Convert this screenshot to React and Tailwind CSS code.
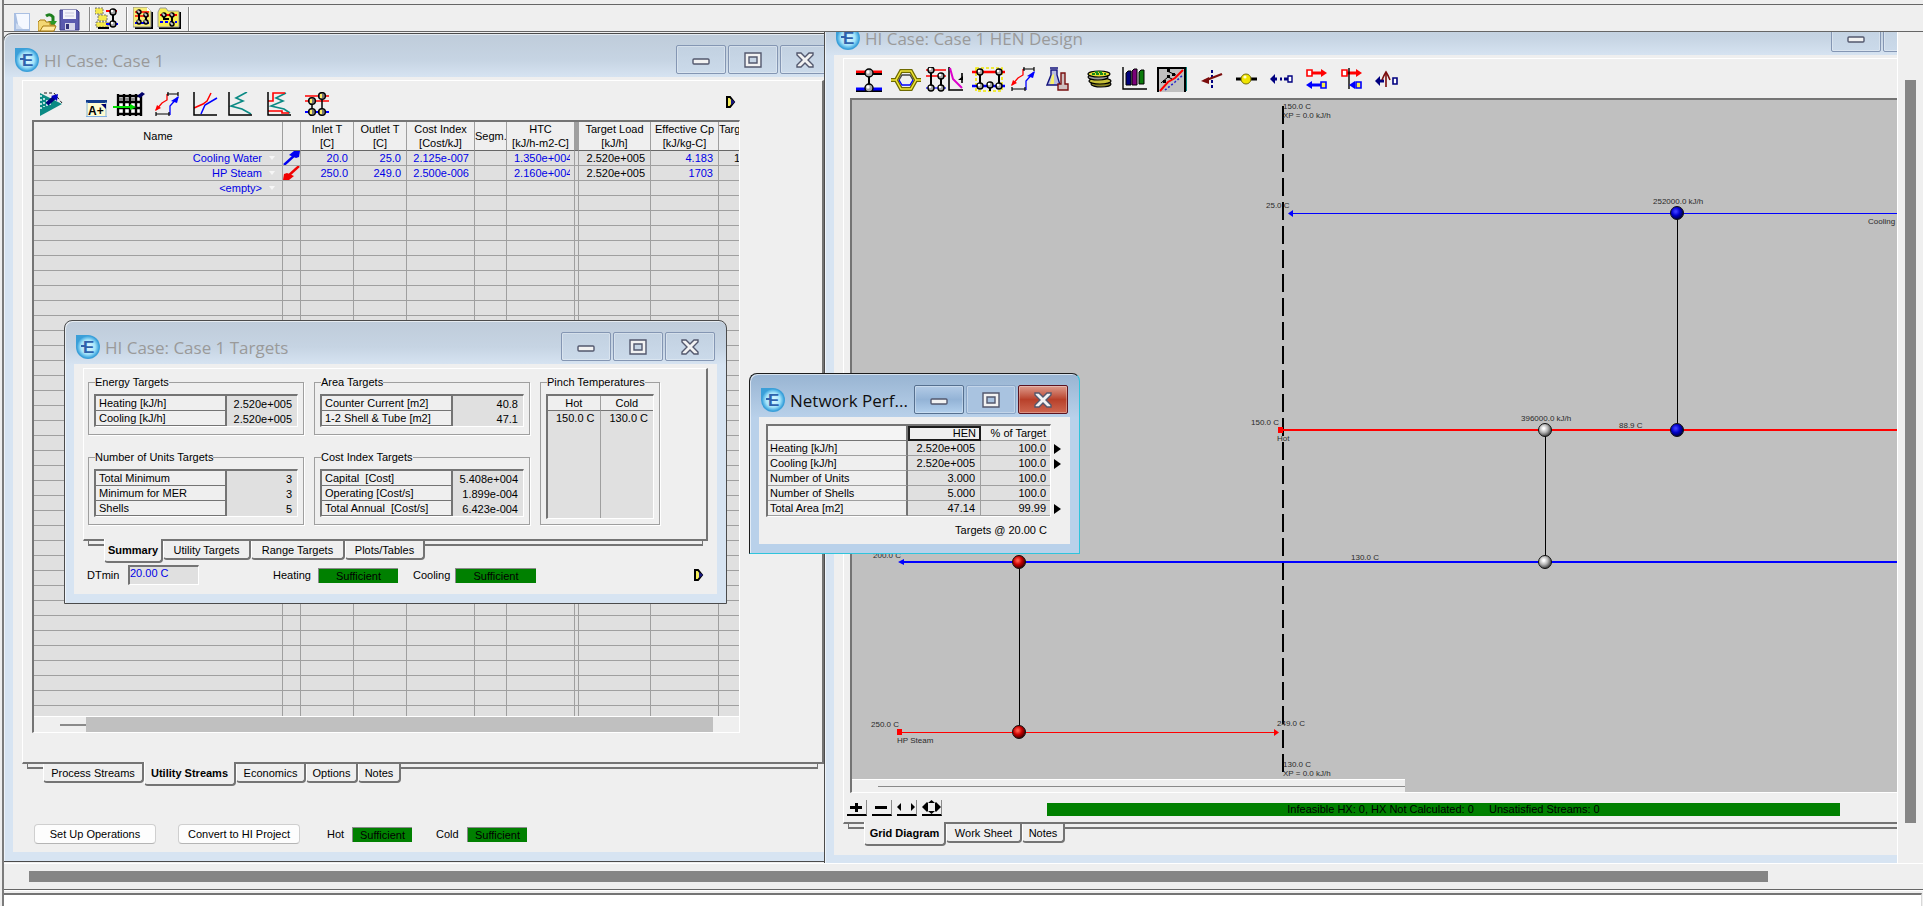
import React from 'react';
import clsx from 'clsx';

const uiFont = "font-['Liberation_Sans',Arial,sans-serif]";
const titleFont = "font-['Open_Sans','Noto_Sans',sans-serif]";
const sunken =
  'border-t-2 border-l-2 border-r border-b border-t-[#747474] border-l-[#747474] border-r-white border-b-white';

/* ---------- icons ---------- */

const Svg = ({ w, h = 24, children, ...rest }) => (
  <svg width={w} height={h} viewBox={`0 0 ${w} ${h}`} fill="none" aria-hidden="true" {...rest}>
    {children}
  </svg>
);

const Dot = ({ x, y, r = 3 }) => (
  <g>
    <circle cx={x} cy={y} r={r} fill="#a8a8a8" stroke="#000" strokeWidth="1.4" />
    <circle cx={x - 1} cy={y - 1} r={r / 2.4} fill="#fff" />
  </g>
);

const YellowDot = ({ x, y }) => (
  <g>
    <circle cx={x} cy={y} r="3.4" fill="#777" stroke="#000" strokeWidth="1.4" />
    <path d={`M${x - 1} ${y - 2}v4`} stroke="#ffee66" strokeWidth="2" />
  </g>
);

const Logo = () => (
  <svg width="24" height="24" viewBox="0 0 24 24" className="shrink-0" aria-hidden="true">
    <defs>
      <radialGradient id="logoFill">
        <stop offset="0" stopColor="#e6fbff" />
        <stop offset="0.65" stopColor="#a5e4fa" />
        <stop offset="1" stopColor="#3ba3dd" />
      </radialGradient>
    </defs>
    <path d="M0 0H12A12 12 0 1 1 0 12Z" fill="#3b9fd8" />
    <circle cx="12" cy="12" r="11" fill="url(#logoFill)" />
    <path d="M5 11h4" stroke="#2f62ac" strokeWidth="2" />
    <text x="7" y="18" fontSize="17" fontWeight="700" fill="#2f62ac" fontFamily="Liberation Sans, Arial, sans-serif">E</text>
  </svg>
);

const PlayMark = () => (
  <svg width="10" height="12" viewBox="0 0 10 12" aria-hidden="true">
    <path d="M1 1H4L8 6L4 11H1Z" fill="#f5ee5a" stroke="#000" strokeWidth="2" />
    <path d="M5 3L9 6L5 9Z" fill="#1a1a80" />
  </svg>
);

const SlimArrow = ({ color, up }) => (
  <svg width="17" height="14" viewBox="0 0 17 14" aria-hidden="true">
    <g transform={up ? undefined : 'rotate(180 8.5 7)'}>
      <path d="M1 14L13 3" stroke={color} strokeWidth="2.4" />
      <path d="M17 0L16 6L13 7L6 4L11 0Z" fill={color} />
    </g>
  </svg>
);

const CompositeCurve = () => (
  <>
    <path d="M1 18L7 11L12 8V2" stroke="#f00" strokeWidth="1.3" />
    <path d="M0 19L2 13L6 16Z" fill="#f00" />
    <path d="M15 23V14L23 5" stroke="#00f" strokeWidth="1.3" />
    <path d="M24 4L22 11L16 9Z" fill="#00f" />
    <path d="M12 2H23M13 0v4M23 0v4M1 22H14M1 20v4M14 20v4" stroke="#000" strokeWidth="1.2" />
  </>
);

const NetworkBox = ({ x = 0, y = 0 }) => (
  <g transform={`translate(${x} ${y})`}>
    <path d="M0 3H14M0 7H14" stroke="#f00" strokeWidth="1.5" />
    <path d="M0 14H14" stroke="#00f" strokeWidth="2" />
    <path d="M4 3V14M11 6V14" stroke="#000" strokeWidth="2" />
    <Dot x={4} y={3} r={2} />
    <Dot x={11} y={6} r={2} />
    <Dot x={4} y={13} r={2} />
    <Dot x={11} y={13} r={2} />
  </g>
);

const fileTools = [
  {
    name: 'New case',
    w: 24,
    art: (
      <>
        <path d="M0 6H16V24H0Z" fill="#a9bfe2" />
        <path d="M2 7H15V22L5 22Z" fill="#f4f8ff" />
        <path d="M2 22V16L9 22Z" fill="#cfdcf0" />
      </>
    ),
  },
  {
    name: 'Open case',
    w: 21,
    art: (
      <>
        <path d="M8 9Q12 6 15 10V16" stroke="#1e7f1e" strokeWidth="3" />
        <path d="M10 14H19L15 20Z" fill="#2a9a2a" />
        <path d="M0 24V15L2 13H7L8 15H12V18H17L15 24Z" fill="#f3d774" stroke="#a87b10" />
        <path d="M2 24L5 19H18L16 24Z" fill="#ffe9a0" stroke="#a87b10" />
      </>
    ),
  },
  {
    name: 'Save case',
    w: 30,
    art: (
      <>
        <path d="M1 3H18L20 5V23H1Z" fill="#5a5aae" stroke="#3a3a86" />
        <path d="M4 3H17V12H4Z" fill="#f2f2fa" />
        <path d="M6 6H15M6 9H15" stroke="#c8c8dc" />
        <path d="M6 16H16V23H6Z" fill="#d6d6ea" />
        <path d="M7 17H10V22H7Z" fill="#33337a" />
      </>
    ),
  },
  { sep: true, w: 6 },
  {
    name: 'Hierarchy',
    w: 31,
    art: (
      <>
        <path d="M0 1H8V7H0ZM3 8H12V14H3ZM1 15H13V20H1Z" fill="#f5e94a" stroke="#777" strokeDasharray="2 1" />
        <path d="M3 21H14" stroke="#000" strokeWidth="2" />
        <path d="M11 4H22" stroke="#f00" strokeWidth="2" />
        <path d="M11 17H23" stroke="#00f" strokeWidth="2" />
        <path d="M18 6V17" stroke="#000" strokeWidth="2" />
        <Dot x={18} y={5} />
        <Dot x={18} y={17} />
      </>
    ),
  },
  { sep: true, w: 7 },
  {
    name: 'Network report',
    w: 24,
    art: (
      <>
        <path d="M2 21H19V5" stroke="#000" strokeWidth="2" />
        <path d="M0 0H14L18 4V20H0Z" fill="#f7ee78" stroke="#888" />
        <path d="M14 0V4H18Z" fill="#fff" />
        <NetworkBox x={2} y={2} />
      </>
    ),
  },
  {
    name: 'Project folder',
    w: 31,
    art: (
      <>
        <path d="M2 21H23V5" stroke="#000" strokeWidth="2" />
        <path d="M1 5L3 1H9L11 4H22V20H1Z" fill="#f7ee50" stroke="#999" />
        <path d="M3 8H20" stroke="#f00" strokeWidth="2" />
        <path d="M3 15H20" stroke="#00f" strokeWidth="2" strokeDasharray="3 2" />
        <path d="M7 8V12H12M15 8V17" stroke="#000" strokeWidth="2" />
        <Dot x={7} y={8} r={2} />
        <Dot x={15} y={8} r={2} />
        <Dot x={15} y={17} r={2} />
      </>
    ),
  },
  { sep: true, w: 4 },
];

const caseTools = [
  {
    name: 'Process view',
    w: 46,
    art: (
      <>
        <path d="M0 1V24L22 12Z" fill="#0b8a84" />
        <path d="M1 3V17M4 6V15M7 8V15M10 11V14" stroke="#dff4f4" strokeWidth="1.6" strokeDasharray="2 2" />
        <path d="M4 1H14L22 11" stroke="#222" strokeDasharray="3 2" />
        <path d="M7 12L15 5" stroke="#00007a" strokeWidth="4" />
        <path d="M18 2L17 9L11 4Z" fill="#0000c8" />
      </>
    ),
  },
  {
    name: 'Annotate utilities',
    w: 27,
    art: (
      <>
        <rect x="0" y="8" width="21" height="17" fill="#fffbd0" />
        <path d="M0 8H21V11H0Z" fill="#123c8c" />
        <path d="M1 10V24M20 10V24M0 24.500H21" stroke="#7fb0e6" />
        <path d="M15 12H20V17Z" fill="#00006e" />
        <text x="2" y="23" fontSize="12" fontWeight="700" fill="#000" fontFamily="Liberation Sans, Arial, sans-serif">A+</text>
      </>
    ),
  },
  {
    name: 'Open stream table',
    w: 42,
    art: (
      <>
        <rect x="3" y="2" width="26" height="22" fill="#fff" />
        <path d="M4 4H27M4 10H27M4 16H27M4 22H27M5 2V24M11 2V24M17 2V24M23 2V24M28 2V24" stroke="#000" strokeWidth="2.4" />
        <path d="M6 6h4v3h-4zM12 6h4v3h-4zM18 6h4v3h-4z" fill="#888" />
        <path d="M0 15H18" stroke="#0d0" strokeWidth="2" />
        <path d="M17 12L23 15L17 18Z" fill="#0d0" />
        <path d="M24 4L29 0L32 2L27 6Z" fill="#00006a" />
      </>
    ),
  },
  { name: 'Composite curves', w: 38, art: <CompositeCurve /> },
  {
    name: 'Utility composite curve',
    w: 35,
    art: (
      <>
        <path d="M1 16L10 12L14 9L18 1" stroke="#f00" strokeWidth="1.5" />
        <path d="M8 22L12 13L24 6" stroke="#00f" strokeWidth="1.5" />
        <path d="M1 0V23H24" stroke="#000" strokeWidth="1.5" />
      </>
    ),
  },
  {
    name: 'Grand composite curve',
    w: 39,
    art: (
      <>
        <path d="M19 0L8 6L15 9L3 14L14 17L23 22" stroke="#0b8a84" strokeWidth="1.6" />
        <path d="M1 0V23H24" stroke="#000" strokeWidth="1.5" />
      </>
    ),
  },
  {
    name: 'Balanced composite curve',
    w: 38,
    art: (
      <>
        <path d="M19 1L9 6L16 9L4 14L17 17L23 21" stroke="#0b8a84" strokeWidth="1.6" />
        <path d="M1 9H6V1H18M1 19H15V21H22" stroke="#f00" strokeWidth="1.6" />
        <path d="M1 0V23H24" stroke="#000" strokeWidth="1.5" />
      </>
    ),
  },
  {
    name: 'Grid diagram',
    w: 24,
    art: (
      <>
        <path d="M0 4H24M0 9H24" stroke="#f00" strokeWidth="1.5" />
        <path d="M0 20H24" stroke="#00f" strokeWidth="2" />
        <path d="M7 9V20M17 4V20" stroke="#000" strokeWidth="1.5" />
        <YellowDot x={7} y={9} />
        <YellowDot x={17} y={4} />
        <YellowDot x={7} y={20} />
        <YellowDot x={17} y={20} />
      </>
    ),
  },
];

const designTools = [
  {
    name: 'Add exchanger',
    w: 35,
    art: (
      <>
        <path d="M0 5H26" stroke="#f00" strokeWidth="3" />
        <path d="M0 7H26M0 24H26" stroke="#000" strokeWidth="2" />
        <path d="M0 22H26" stroke="#00f" strokeWidth="3" />
        <path d="M13 6V20" stroke="#000" strokeWidth="2" />
        <Dot x={13} y={6} r={4} />
        <Dot x={13} y={21} r={4} />
      </>
    ),
  },
  {
    name: 'Loops',
    w: 35,
    art: (
      <>
        <path d="M0 13H5L10 4H20L25 13H30M5 13L10 22H20L25 13" stroke="#6e6a00" strokeWidth="4" />
        <path d="M0 13H5L10 4H20L25 13H30M5 13L10 22H20L25 13" stroke="#f2e83a" strokeWidth="1.5" />
        <path d="M8 13L11 8H19L22 13" fill="none" stroke="#444" strokeWidth="1.4" />
        <path d="M8 13L11 18H19L22 13" stroke="#00f" strokeWidth="1.4" />
      </>
    ),
  },
  {
    name: 'Driving force',
    w: 46,
    art: (
      <>
        <path d="M0 3H20M0 9H20" stroke="#f00" strokeWidth="1.4" />
        <path d="M0 21H20" stroke="#22f" strokeWidth="1.4" />
        <path d="M5 3V21M15 9V21" stroke="#000" strokeWidth="2" />
        <Dot x={5} y={3} />
        <Dot x={15} y={9} />
        <Dot x={5} y={21} />
        <Dot x={15} y={21} />
        <path d="M23 0V23H37M36 6V16" stroke="#000" strokeWidth="1.6" />
        <path d="M24 1L27 12L36 21" stroke="#d0c" strokeWidth="2" />
        <path d="M32 13H37L37 9Z" fill="#000" />
      </>
    ),
  },
  {
    name: 'Topology',
    w: 39,
    art: (
      <>
        <rect x="4" y="1" width="26" height="23" stroke="#f0e800" strokeWidth="1.6" strokeDasharray="3 2" />
        <path d="M0 5H33" stroke="#f00" strokeWidth="2.4" />
        <path d="M0 19H33" stroke="#00f" strokeWidth="2.4" />
        <path d="M8 5V19M27 5V19M18 19V24" stroke="#000" strokeWidth="2" />
        <Dot x={8} y={5} />
        <Dot x={27} y={5} />
        <Dot x={8} y={19} />
        <Dot x={18} y={18} />
        <Dot x={27} y={19} />
      </>
    ),
  },
  { name: 'Composite curves', w: 35, art: <CompositeCurve /> },
  {
    name: 'Properties',
    w: 41,
    art: (
      <>
        <path d="M4 1H12M5 3V8L1 18H14L11 8V3Z" fill="#b9bde0" stroke="#14147e" strokeWidth="1.4" />
        <path d="M6 8L4 17H8V7Z" fill="#f6ef6a" />
        <path d="M15 6H19V17H22V23H12V17H15Z" fill="#cfc0c0" stroke="#7a1010" strokeWidth="1.4" />
      </>
    ),
  },
  {
    name: 'Costs',
    w: 35,
    art: (
      <>
        <ellipse cx="14" cy="17" rx="10" ry="3" fill="#888220" stroke="#000" strokeWidth="1.2" />
        <ellipse cx="13" cy="14" rx="11" ry="3" fill="#c8c03a" stroke="#000" strokeWidth="1.2" />
        <ellipse cx="11" cy="10" rx="10" ry="3" fill="#999" stroke="#000" strokeWidth="1.2" />
        <ellipse cx="12" cy="7" rx="11" ry="3" fill="#e8e030" stroke="#000" strokeWidth="1.2" />
        <path d="M5 7H19M8 5H16" stroke="#1b8a1b" strokeWidth="2" strokeDasharray="3 1" />
      </>
    ),
  },
  {
    name: 'Bar chart',
    w: 35,
    art: (
      <>
        <path d="M1 0V22H25" stroke="#000" strokeWidth="1.4" />
        <path d="M4 6L6 4H9V18H4Z" fill="#00007c" stroke="#000" />
        <path d="M10 4L12 2H15V18H10Z" fill="#7a0078" stroke="#000" />
        <path d="M17 5L19 3H22V17H17Z" fill="#0a7a0a" stroke="#000" />
      </>
    ),
  },
  {
    name: 'Driving force plot',
    w: 44,
    art: (
      <>
        <path d="M1 25V1H28V25" fill="#c0c0c0" stroke="#000" strokeWidth="2" />
        <path d="M29.500 0V24" stroke="#0b8a84" />
        <path d="M3 24L11 15L18 11L26 3" stroke="#f00" strokeWidth="2" />
        <path d="M8 23L18 15L26 8" stroke="#22c" strokeWidth="1.6" strokeDasharray="2 2" />
        <path d="M4 16L11 10L15 12M10 4L19 8" stroke="#000" strokeWidth="1" />
        <path d="M10 8h3v3h-3zM6 13h3v3h-3zM15 6h3v3h-3zM10 2h3v3h-3z" fill="#000" />
      </>
    ),
  },
  {
    name: 'Add utility split',
    w: 35,
    art: (
      <>
        <path d="M11 3V21" stroke="#000080" strokeWidth="2" strokeDasharray="3 2" />
        <path d="M3 14L21 7" stroke="#7a0c0c" strokeWidth="2.4" />
        <path d="M0 14L8 10V17Z" fill="#7a0c0c" />
      </>
    ),
  },
  {
    name: 'Add mixer',
    w: 34,
    art: (
      <>
        <path d="M0 12H21" stroke="#000" strokeWidth="3" />
        <circle cx="10" cy="12" r="5" fill="#f0e400" stroke="#77700a" />
        <circle cx="9" cy="10" r="1.6" fill="#fffdd0" />
      </>
    ),
  },
  {
    name: 'Move stream',
    w: 36,
    art: (
      <>
        <path d="M0 12L5 7V17Z" fill="#000080" />
        <path d="M4 12H7M10 12H12M14 12H18" stroke="#000080" strokeWidth="3" />
        <path d="M18 9H22V15H18Z" fill="#fff" stroke="#000080" strokeWidth="1.4" />
      </>
    ),
  },
  {
    name: 'Swap streams',
    w: 35,
    art: (
      <>
        <path d="M4 6H18" stroke="#f00" strokeWidth="3" />
        <path d="M15 2L21 6L15 10Z" fill="#f00" />
        <path d="M1 3H6V9H1Z" fill="#fff" stroke="#f00" strokeWidth="1.6" />
        <path d="M4 18H18" stroke="#00f" strokeWidth="3" />
        <path d="M6 14L0 18L6 22Z" fill="#00f" />
        <path d="M15 15H20V21H15Z" fill="#f7ee50" stroke="#00f" strokeWidth="1.6" />
      </>
    ),
  },
  {
    name: 'Pinch streams',
    w: 34,
    art: (
      <>
        <path d="M4 6H18" stroke="#f00" strokeWidth="3" />
        <path d="M15 2L21 6L15 10Z" fill="#f00" />
        <path d="M1 3H6V9H1Z" fill="#fff" stroke="#f00" strokeWidth="1.6" />
        <path d="M8 1V22" stroke="#000" strokeWidth="1.4" />
        <path d="M14 14L8 18L14 22Z" fill="#00f" />
        <path d="M15 15H20V21H15Z" fill="#f7ee50" stroke="#00f" strokeWidth="1.6" />
      </>
    ),
  },
  {
    name: 'Split stream',
    w: 24,
    art: (
      <>
        <path d="M0 14L5 9V19Z" fill="#000080" />
        <path d="M5 14H9" stroke="#000080" strokeWidth="3" />
        <path d="M11 5V20" stroke="#7a0c0c" strokeWidth="1.6" />
        <path d="M7 13Q9 8 11 5Q13 8 15 13" stroke="#7a0c0c" strokeWidth="1.6" />
        <path d="M18 11H22V17H18Z" fill="#fff" stroke="#000080" strokeWidth="1.6" />
      </>
    ),
  },
];

const ToolStrip = ({ tools, className }) => (
  <div className={clsx('flex items-start', className)}>
    {tools.map((tool, i) =>
      tool.sep ? (
        <Svg key={i} w={tool.w} h={24}>
          <path d="M0.5 0V24" stroke="#888" />
          <path d="M1.5 0V24" stroke="#fff" />
        </Svg>
      ) : (
        <button key={i} type="button" aria-label={tool.name} className="block shrink-0">
          <Svg w={tool.w} h={25}>{tool.art}</Svg>
        </button>
      )
    )}
  </div>
);

/* ---------- window chrome ---------- */

const captionShapes = {
  Minimize: <rect x="9" y="9" width="16" height="5" rx="1" />,
  Maximize: <path fillRule="evenodd" d="M9 3H25V17H9ZM13 7V13H21V7Z" />,
  Close: <path d="M9 3H13L17 7L21 3H25V5L20 10L25 15V17H21L17 13L13 17H9V15L14 10L9 5V3Z" />,
};

const CaptionButton = ({ kind, active }) => (
  <button
    type="button"
    aria-label={kind}
    className={clsx(
      'flex h-[29px] w-[50px] items-center justify-center rounded-xs border shadow-[inset_0_0_0_1px_rgba(255,255,255,0.3)]',
      !active && 'border-[#8496b3] bg-linear-to-b from-[#c2d1e1] to-[#cbdaea]',
      active && kind === 'Close' && 'border-[#5c1320] bg-linear-to-b from-[#dc9a8c] via-[#b8402a] to-[#cd6650]',
      active && kind === 'Minimize' && 'border-[#56708f] bg-linear-to-b from-[#b3cbe6] via-[#93b3d6] to-[#b2cfec]',
      active && kind === 'Maximize' && 'border-[#8aa5c6] bg-[#a9c3e0]'
    )}
  >
    <svg width="34" height="20" viewBox="0 0 34 20" fill="#f2f2f2" stroke="#53586e" strokeWidth="1.4" aria-hidden="true">
      {captionShapes[kind]}
    </svg>
  </button>
);

const MdiWindow = ({ title, active, className, children }) => (
  <section
    className={clsx(
      'absolute flex flex-col rounded-t-lg border px-[9px] pb-[9px] shadow-[inset_1px_1px_0_rgba(255,255,255,0.6)]',
      active
        ? 'border-[#1c1c1c] border-r-[#2fc4dc] border-b-[#2fc4dc] bg-[#b9d1ea] bg-[linear-gradient(#98b4d2,#b9d1ea_44px)]'
        : 'border-[#4b4b4b] bg-[#d7e4f2] bg-[linear-gradient(#bfccda,#c6d4e3_26px,#d7e4f2_44px)]',
      className
    )}
  >
    <header className="flex h-[43px] shrink-0 items-center gap-[2px] pt-2 pr-[2px] pl-[2px]">
      <Logo />
      <h2
        className={clsx(
          'mr-auto truncate pt-[3px] pl-[3px] text-[17px] leading-6',
          titleFont,
          active ? 'text-[#101010]' : 'text-[#9a9a9a]'
        )}
      >
        {title}
      </h2>
      <CaptionButton kind="Minimize" active={active} />
      <CaptionButton kind="Maximize" active={active} />
      <CaptionButton kind="Close" active={active} />
    </header>
    <div className="flex min-h-0 flex-1 flex-col bg-[#efefef]">{children}</div>
  </section>
);

const Stub = ({ className }) => (
  <span className={clsx('h-[5px] border-b-2 border-[#747474]', className)} />
);

const Tabs = ({ tabs, current, className }) => (
  <div role="tablist" className={clsx('mx-[14px] flex items-start', className)}>
    <Stub className="w-4 border-l" />
    {tabs.map((tab) => (
      <button
        key={tab.label}
        type="button"
        role="tab"
        aria-selected={tab.label === current}
        className={clsx(
          'shrink-0 rounded-b-sm border-r-2 border-b-2 border-l border-r-[#747474] border-b-[#747474] border-l-white bg-[#efefef] text-center whitespace-nowrap',
          tab.label === current ? 'relative -mt-[2px] h-[24px] font-bold' : 'h-[19px]',
          tab.width
        )}
      >
        {tab.label}
      </button>
    ))}
    <Stub className="flex-1 border-r" />
  </div>
);

const panelBorder =
  'border-t border-l border-r-2 border-b-2 border-t-white border-l-white border-r-[#747474] border-b-[#747474]';

const Status = ({ children, className }) => (
  <output
    className={clsx(
      'block h-[15px] border-t border-l border-t-[#8a8a8a] border-l-[#8a8a8a] bg-[#008000] text-center leading-[15px]',
      className
    )}
  >
    {children}
  </output>
);

/* ---------- HI case window ---------- */

const columns = [
  { lines: ['Name'], width: 'w-[249px]' },
  { lines: [], width: 'w-[18px]' },
  { lines: ['Inlet T', '[C]'], width: 'w-[53px]' },
  { lines: ['Outlet T', '[C]'], width: 'w-[53px]' },
  { lines: ['Cost Index', '[Cost/kJ]'], width: 'w-[68px]' },
  { lines: ['Segm.'], width: 'w-[32px]' },
  { lines: ['HTC', '[kJ/h-m2-C]'], width: 'w-[68px]' },
  { lines: [], width: 'w-[4px]' },
  { lines: ['Target Load', '[kJ/h]'], width: 'w-[72px]' },
  { lines: ['Effective Cp', '[kJ/kg-C]'], width: 'w-[68px]' },
  { lines: ['Targ', ''], width: 'w-[22px]' },
];

const utilities = [
  ['Cooling Water', 'cold', '20.0', '25.0', '2.125e-007', '', '1.350e+004', '', '2.520e+005', '4.183', '1'],
  ['HP Steam', 'hot', '250.0', '249.0', '2.500e-006', '', '2.160e+004', '', '2.520e+005', '1703', ''],
  ['<empty>', '', '', '', '', '', '', '', '', '', ''],
];

const BLANK_ROWS = 35;

const UtilityCell = ({ value, col }) => {
  if (col === 0 && value) {
    return (
      <span className="flex items-center justify-end gap-[7px] pr-[7px]">
        {value}
        <svg width="6" height="4" viewBox="0 0 6 4" aria-hidden="true">
          <path d="M0 0H6L3 4Z" fill="#f6f6f6" />
        </svg>
      </span>
    );
  }
  if (col === 1 && value) {
    return <SlimArrow up={value === 'cold'} color={value === 'cold' ? '#0000f0' : '#f00000'} />;
  }
  if (col === 6) {
    return <span className="ml-[7px] block w-[56px] overflow-hidden text-left">{value}</span>;
  }
  return <span className={clsx('block', col !== 10 && 'pr-[5px]')}>{value}</span>;
};

const UtilityTable = () => (
  <table className="w-[707px] table-fixed border-separate border-spacing-0">
    <thead>
      <tr className="h-[29px]">
        {columns.map((col, i) => (
          <th
            key={i}
            scope="col"
            className={clsx(
              'overflow-hidden border-r border-b border-r-[#9f9f9f] border-b-[#666] p-0 text-center leading-[14px] font-normal whitespace-nowrap',
              i === 7 ? 'bg-[#9f9f9f]' : 'bg-[#efefef]',
              col.width
            )}
          >
            {col.lines.map((line, n) => (
              <div key={n} className="h-[14px]">{line}</div>
            ))}
          </th>
        ))}
      </tr>
    </thead>
    <tbody>
      {[...utilities, ...Array(BLANK_ROWS).fill(null)].map((row, r) => (
        <tr key={r} className="h-[15px]">
          {columns.map((_, c) => (
            <td
              key={c}
              className={clsx(
                'h-[15px] overflow-hidden border-r border-b border-[#9f9f9f] p-0 text-right align-top leading-[14px] whitespace-nowrap',
                c === 8 || c === 10 ? 'text-black' : 'text-[#0000e6]'
              )}
            >
              {row && row[c] ? <UtilityCell value={row[c]} col={c} /> : null}
            </td>
          ))}
        </tr>
      ))}
    </tbody>
  </table>
);

const caseTabs = [
  { label: 'Process Streams', width: 'w-[101px]' },
  { label: 'Utility Streams', width: 'w-[92px]' },
  { label: 'Economics', width: 'w-[70px]' },
  { label: 'Options', width: 'w-[52px]' },
  { label: 'Notes', width: 'w-[43px]' },
];

const pushButton =
  'h-5 w-[122px] rounded-sm border border-[#cfcfcf] border-b-[#b5b5b5] bg-[#fdfdfd] text-center';

const CaseWindow = () => (
  <MdiWindow title="HI Case: Case 1" className="top-px bottom-px -left-px w-[839px]">
    <div className={clsx('mt-[3px] mr-2 ml-[9px] flex min-h-0 flex-1 flex-col', panelBorder)}>
      <div className="flex h-[39px] shrink-0 items-start justify-between pt-[11px] pr-[86px] pl-[17px]">
        <ToolStrip tools={caseTools} />
        <button type="button" aria-label="Run" className="mt-1">
          <PlayMark />
        </button>
      </div>
      <div className={clsx('mr-[82px] mb-[29px] ml-[9px] flex min-h-0 flex-1 flex-col bg-[#e0e0e0]', sunken)}>
        <div className="min-h-0 flex-1 overflow-hidden">
          <UtilityTable />
        </div>
        <div className="flex h-4 shrink-0 border-t border-white bg-[#efefef]">
          <div className="flex w-[52px] items-center justify-end">
            <span className="h-[2px] w-[26px] bg-[#8a8a8a]" />
          </div>
          <div className="mr-[26px] flex-1 bg-[#c0c0c0]" />
        </div>
      </div>
    </div>
    <Tabs tabs={caseTabs} current="Utility Streams" className="h-[60px]" />
    <div className="mb-2 flex h-5 items-center pl-[21px]">
      <button type="button" className={pushButton}>Set Up Operations</button>
      <button type="button" className={clsx('ml-[22px]', pushButton)}>Convert to HI Project</button>
      <span className="ml-[27px] w-[25px]">Hot</span>
      <Status className="w-[60px]">Sufficient</Status>
      <span className="ml-[24px] w-[31px]">Cold</span>
      <Status className="w-[60px]">Sufficient</Status>
    </div>
  </MdiWindow>
);

/* ---------- HEN design window ---------- */

const ballColors = {
  blue: ['#3a3aff', '#0000c8', '#000030'],
  red: ['#ff5a4a', '#c80000', '#300000'],
  gray: ['#ffffff', '#b4b4b4', '#303030'],
};

const balls = [
  { x: 825, y: 113, color: 'blue' },
  { x: 825, y: 330, color: 'blue' },
  { x: 693, y: 330, color: 'gray' },
  { x: 693, y: 462, color: 'gray' },
  { x: 167, y: 462, color: 'red' },
  { x: 167, y: 632, color: 'red' },
];

const gridLabels = [
  { x: 431, y: 9, text: '150.0 C' },
  { x: 431, y: 18, text: 'XP = 0.0 kJ/h' },
  { x: 414, y: 108, text: '25.0 C' },
  { x: 801, y: 104, text: '252000.0 kJ/h' },
  { x: 1016, y: 124, text: 'Cooling Water' },
  { x: 399, y: 325, text: '150.0 C' },
  { x: 425, y: 341, text: 'Hot' },
  { x: 669, y: 321, text: '396000.0 kJ/h' },
  { x: 767, y: 328, text: '88.9 C' },
  { x: 21, y: 458, text: '200.0 C' },
  { x: 499, y: 460, text: '130.0 C' },
  { x: 19, y: 627, text: '250.0 C' },
  { x: 45, y: 643, text: 'HP Steam' },
  { x: 425, y: 626, text: '249.0 C' },
  { x: 431, y: 667, text: '130.0 C' },
  { x: 431, y: 676, text: 'XP = 0.0 kJ/h' },
];

const GridDiagram = () => (
  <svg className="block min-h-0 w-full flex-1" role="img" aria-label="Heat exchanger network">
    <defs>
      {Object.entries(ballColors).map(([name, stops]) => (
        <radialGradient key={name} id={`ball-${name}`} cx="0.4" cy="0.38" r="0.65">
          <stop offset="0.1" stopColor={stops[0]} />
          <stop offset="0.5" stopColor={stops[1]} />
          <stop offset="1" stopColor={stops[2]} />
        </radialGradient>
      ))}
    </defs>
    <g shapeRendering="crispEdges">
      <line x1="431" y1="6" x2="431" y2="672" stroke="#000" strokeWidth="2" strokeDasharray="18 6" />
      <line x1="437" y1="113.5" x2="100%" y2="113.5" stroke="#00f" />
      <line x1="428" y1="330" x2="100%" y2="330" stroke="#f00" strokeWidth="2" />
      <line x1="48" y1="462" x2="100%" y2="462" stroke="#00f" strokeWidth="2" />
      <line x1="48" y1="632.5" x2="424" y2="632.5" stroke="#f00" />
      <path d="M825.5 113V330M693.5 330V462M167.5 462V632" stroke="#000" />
      <rect x="426" y="327" width="5" height="6" fill="#f00" />
      <rect x="45" y="629" width="5" height="6" fill="#f00" />
    </g>
    <path d="M436 113.5L441 110V117Z" fill="#00f" />
    <path d="M46 462L52 459V465Z" fill="#00f" />
    <path d="M427 632.5L422 629V636Z" fill="#f00" />
    {balls.map((b) => (
      <circle key={`${b.x}-${b.y}`} cx={b.x} cy={b.y} r="6.5" fill={`url(#ball-${b.color})`} stroke="#111" />
    ))}
    <g fill="#2b2b2b" fontSize="8">
      {gridLabels.map((l) => (
        <text key={`${l.x}-${l.y}`} x={l.x} y={l.y}>{l.text}</text>
      ))}
    </g>
  </svg>
);

const zoomTools = [
  { name: 'Zoom in', art: <path d="M8 3H11V6H15V9H11V12H8V9H3V6H8Z" fill="#000" /> },
  { name: 'Zoom out', art: <path d="M3 6H15V9H3Z" fill="#000" /> },
  { name: 'Fit width', art: <path d="M0 7L4 3V11ZM18 7L14 3V11Z" fill="#000" /> },
  {
    name: 'Fit all',
    art: (
      <>
        <path d="M0 7L4 3V11ZM19 7L15 3V11ZM9.5 0L13 3H6ZM9.5 14L13 11H6Z" fill="#000" />
        <path d="M6 3.5H5V10.500H6M13 3.500H14V10.500H13" stroke="#000" strokeWidth="2" />
      </>
    ),
  },
];

const designTabs = [
  { label: 'Grid Diagram', width: 'w-[82px]' },
  { label: 'Work Sheet', width: 'w-[76px]' },
  { label: 'Notes', width: 'w-[43px]' },
];

const DesignWindow = () => (
  <MdiWindow
    title="HI Case: Case 1 HEN Design"
    className="-top-[21px] -right-[100px] -bottom-[2px] left-[820px]"
  >
    <div className={clsx('mx-[9px] mt-[3px] flex min-h-0 flex-1 flex-col', panelBorder)}>
      <ToolStrip tools={designTools} className="h-[39px] shrink-0 pt-2 pl-3" />
      <div className={clsx('ml-[6px] flex min-h-0 flex-1 flex-col bg-[#c0c0c0]', sunken)}>
        <GridDiagram />
        <div className="flex h-[13px] w-[553px] shrink-0 items-center border-t border-white bg-[#efefef] pl-[26px]">
          <span className="h-px flex-1 bg-[#8a8a8a]" />
        </div>
      </div>
      <div className="flex h-[29px] shrink-0 items-start gap-[5px] pt-[7px] pl-[3px]">
        {zoomTools.map((tool) => (
          <button
            key={tool.name}
            type="button"
            aria-label={tool.name}
            className="h-4 w-5 border-r border-b-2 border-r-[#8a8a8a] border-b-black"
          >
            <Svg w={19} h={14}>{tool.art}</Svg>
          </button>
        ))}
        <output className="mt-[3px] mr-[136px] ml-[100px] block h-[13px] flex-1 bg-[#008000] text-center leading-[13px] whitespace-pre">
          {'Infeasible HX: 0, HX Not Calculated: 0     Unsatisfied Streams: 0'}
        </output>
      </div>
    </div>
    <Tabs tabs={designTabs} current="Grid Diagram" className="h-[31px]" />
  </MdiWindow>
);

/* ---------- targets window ---------- */

const KeyValueBox = ({ legend, rows }) => (
  <fieldset className="min-w-0 border border-[#9f9f9f] px-[5px] pb-[7px] shadow-[1px_1px_0_#fff]">
    <legend className="ml-px h-[14px] leading-[14px]">{legend}</legend>
    <table className={clsx('mt-[5px] w-full table-fixed border-separate border-spacing-0 bg-[#e0e0e0]', sunken)}>
      <tbody>
        {rows.map(([label, value]) => (
          <tr key={label} className="h-[15px]">
            <th
              scope="row"
              className="w-[131px] border-r-2 border-b border-[#747474] bg-[#efefef] p-0 pl-[3px] text-left leading-[14px] font-normal whitespace-pre"
            >
              {label}
            </th>
            <td className="p-0 pr-[5px] text-right leading-[14px]">{value}</td>
          </tr>
        ))}
      </tbody>
    </table>
  </fieldset>
);

const targetTabs = [
  { label: 'Summary', width: 'w-[59px]' },
  { label: 'Utility Targets', width: 'w-[88px]' },
  { label: 'Range Targets', width: 'w-[94px]' },
  { label: 'Plots/Tables', width: 'w-[80px]' },
];

const TargetsWindow = () => (
  <MdiWindow title="HI Case: Case 1 Targets" className="top-[288px] left-[60px] w-[663px]">
    <div
      className={clsx(
        'mx-[9px] mt-1 grid grid-cols-[216px_216px_120px] gap-x-[10px] gap-y-[15px] pt-[6px] pb-[14px] pl-1',
        panelBorder
      )}
    >
      <KeyValueBox
        legend="Energy Targets"
        rows={[
          ['Heating [kJ/h]', '2.520e+005'],
          ['Cooling [kJ/h]', '2.520e+005'],
        ]}
      />
      <KeyValueBox
        legend="Area Targets"
        rows={[
          ['Counter Current [m2]', '40.8'],
          ['1-2 Shell & Tube [m2]', '47.1'],
        ]}
      />
      <fieldset className="row-span-2 flex min-w-0 flex-col border border-[#9f9f9f] px-[5px] pb-[5px] shadow-[1px_1px_0_#fff]">
        <legend className="ml-px h-[14px] leading-[14px]">Pinch Temperatures</legend>
        <table className={clsx('mt-[5px] h-[125px] w-full table-fixed border-separate border-spacing-0 bg-[#e0e0e0]', sunken)}>
          <thead>
            <tr className="h-[15px] bg-[#efefef]">
              <th scope="col" className="border-r border-b border-r-[#9f9f9f] border-b-[#747474] p-0 text-center leading-[14px] font-normal">Hot</th>
              <th scope="col" className="border-b border-b-[#747474] p-0 text-center leading-[14px] font-normal">Cold</th>
            </tr>
          </thead>
          <tbody>
            <tr className="align-top">
              <td className="border-r border-[#9f9f9f] p-0 pr-[5px] text-right leading-[14px]">150.0 C</td>
              <td className="p-0 pr-[5px] text-right leading-[14px]">130.0 C</td>
            </tr>
          </tbody>
        </table>
      </fieldset>
      <KeyValueBox
        legend="Number of Units Targets"
        rows={[
          ['Total Minimum', '3'],
          ['Minimum for MER', '3'],
          ['Shells', '5'],
        ]}
      />
      <KeyValueBox
        legend="Cost Index Targets"
        rows={[
          ['Capital  [Cost]', '5.408e+004'],
          ['Operating [Cost/s]', '1.899e-004'],
          ['Total Annual  [Cost/s]', '6.423e-004'],
        ]}
      />
    </div>
    <Tabs tabs={targetTabs} current="Summary" className="h-[24px]" />
    <div className="mb-[9px] flex h-5 items-center pr-[13px] pl-[13px]">
      <label htmlFor="dtmin" className="w-[41px]">DTmin</label>
      <input
        id="dtmin"
        type="text"
        defaultValue="20.00 C"
        className={clsx('h-5 w-[71px] bg-[#e0e0e0] pb-[5px] text-[#0000e6]', sunken)}
      />
      <span className="ml-[74px] w-[45px]">Heating</span>
      <Status className="w-[80px]">Sufficient</Status>
      <span className="ml-[15px] w-[42px]">Cooling</span>
      <Status className="w-[81px]">Sufficient</Status>
      <button type="button" aria-label="Run" className="ml-auto">
        <PlayMark />
      </button>
    </div>
  </MdiWindow>
);

/* ---------- network performance window ---------- */

const performance = [
  { label: 'Heating [kJ/h]', hen: '2.520e+005', pct: '100.0', more: true },
  { label: 'Cooling [kJ/h]', hen: '2.520e+005', pct: '100.0', more: true },
  { label: 'Number of Units', hen: '3.000', pct: '100.0' },
  { label: 'Number of Shells', hen: '5.000', pct: '100.0' },
  { label: 'Total Area [m2]', hen: '47.14', pct: '99.99', more: true },
];

const PerformanceWindow = () => (
  <MdiWindow title="Network Perf..." active className="top-[341px] left-[745px] w-[331px]">
    <div className="flex pt-[7px] pl-[7px]">
      <table className={clsx('w-[285px] table-fixed border-separate border-spacing-0', sunken)}>
        <thead>
          <tr className="h-[15px]">
            <td className="w-[140px] border-r-2 border-b border-[#747474] bg-[#f4f4f4] p-0" />
            <th scope="col" className="w-[73px] border-2 border-[#1c1c1c] p-0 pr-[3px] text-right leading-[11px] font-normal">HEN</th>
            <th scope="col" className="border-b border-[#9f9f9f] p-0 pr-[4px] text-right leading-[14px] font-normal whitespace-nowrap">% of Target</th>
          </tr>
        </thead>
        <tbody>
          {performance.map((row) => (
            <tr key={row.label} className="h-[15px]">
              <th scope="row" className="border-r-2 border-b border-r-[#747474] border-b-[#9f9f9f] p-0 pl-[2px] text-left leading-[14px] font-normal">{row.label}</th>
              <td className="border-r border-b border-[#9f9f9f] bg-[#e0e0e0] p-0 pr-[5px] text-right leading-[14px]">{row.hen}</td>
              <td className="border-b border-[#9f9f9f] bg-[#e0e0e0] p-0 pr-[4px] text-right leading-[14px]">{row.pct}</td>
            </tr>
          ))}
        </tbody>
      </table>
      <div className="ml-[3px] flex flex-col pt-[17px]">
        {performance.map((row) => (
          <div key={row.label} className="flex h-[15px] items-center">
            {row.more && (
              <button type="button" aria-label={`Details for ${row.label}`}>
                <svg width="7" height="10" viewBox="0 0 7 10" className="block" aria-hidden="true">
                  <path d="M0 0L7 5L0 10Z" fill="#000" />
                </svg>
              </button>
            )}
          </div>
        ))}
      </div>
    </div>
    <p className="pt-[5px] pr-[23px] pb-[6px] text-right leading-4">Targets @ 20.00 C</p>
  </MdiWindow>
);

/* ---------- shell ---------- */

export default function App() {
  return (
    <div className={clsx('flex h-screen w-full overflow-hidden bg-[#efefef] text-[11px] leading-[14px] text-black', uiFont)}>
      <div className="w-[4px] shrink-0 border-r-2 border-[#7c7c7c]" />
      <div className="flex min-w-0 flex-1 flex-col">
        <div className="mt-1 h-7 shrink-0 border-t border-b border-[#666] pt-[2px] pl-[10px]">
          <ToolStrip tools={fileTools} />
        </div>
        <div className="flex min-h-0 flex-1">
          <main className="relative min-w-0 flex-1 overflow-hidden border-r border-white">
            <CaseWindow />
            <DesignWindow />
            <TargetsWindow />
            <PerformanceWindow />
          </main>
          <div className="flex w-[25px] shrink-0 flex-col pt-12 pr-[7px] pb-10 pl-[7px]">
            <div className="flex-1 bg-[#858585]" />
          </div>
        </div>
        <div className="h-[26px] shrink-0 border-t border-white pt-[7px] pr-[155px] pl-[25px]">
          <div className="h-[11px] bg-[#858585]" />
        </div>
        <div className="h-[17px] shrink-0 border-t border-[#666]">
          <div className="h-[3px] border-t border-white" />
          <div className="mr-px h-[13px] border-t-2 border-r border-t-[#747474] border-r-[#d8d8d8] bg-white" />
        </div>
      </div>
    </div>
  );
}
